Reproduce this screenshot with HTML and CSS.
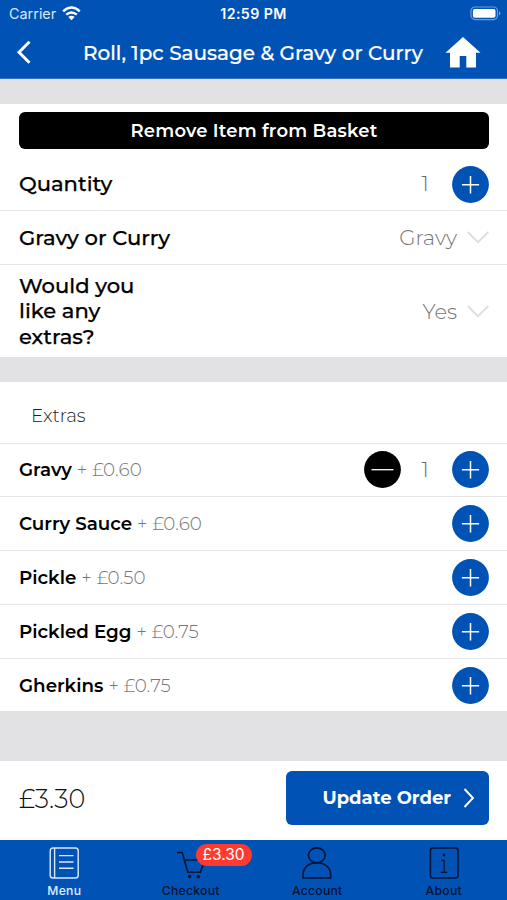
FILE: index.html
```html
<!DOCTYPE html>
<html lang="en">
<head>
<meta charset="utf-8">
<title>Edit item</title>
<link rel="stylesheet" href="styles.css">
</head>
<body>
<svg class="defs" aria-hidden="true">
  <symbol id="plus" viewBox="0 0 37 37"><circle cx="18.5" cy="18.5" r="18.4" fill="#0052b5"/><path d="M9.9 18.7h17.2M18.5 10v17.4" stroke="#fff" stroke-width="1.5"/></symbol>
  <symbol id="minus" viewBox="0 0 37 37"><circle cx="18.5" cy="18.5" r="18.4" fill="#000"/><path d="M7.5 18.7h22" stroke="#fff" stroke-width="1.3"/></symbol>
  <symbol id="down" viewBox="0 0 22 13"><path d="M.7 1L11 11.2 21.3 1" fill="none" stroke="#dedee0" stroke-width="1.9"/></symbol>
</svg>
<div class="app">
  <header class="header">
    <div class="status">
      <div class="carrier"><span>Carrier</span>
        <svg width="19" height="15" viewBox="0 0 19 15"><g fill="none" stroke="#fff" stroke-width="2.4"><path d="M1.2 5.3Q9.5-2.1 17.8 5.3"/><path d="M4.2 8.7Q9.5 4.2 14.8 8.7"/></g><path d="M6.3 11Q9.5 8.4 12.7 11L9.5 14.3z" fill="#fff"/></svg>
      </div>
      <div class="time">12:59 PM</div>
      <svg class="battery" width="31" height="15" viewBox="0 0 31 15"><rect x="1" y="1" width="26.5" height="12.6" rx="4" fill="none" stroke="#6f9cd5" stroke-width="1.2"/><rect x="2.9" y="2.9" width="22.6" height="8.8" rx="1.8" fill="#fff"/><path d="M29 5v4.6q3-2.3 0-4.6" fill="#6f9cd5"/></svg>
    </div>
    <div class="nav">
      <svg class="back" width="16" height="25" viewBox="0 0 16 25"><path d="M13.5 1.7L3 12.2 13.5 22.7" fill="none" stroke="#fff" stroke-width="3"/></svg>
      <h1 class="title">Roll, 1pc Sausage &amp; Gravy or Curry</h1>
      <svg class="home" width="36" height="32" viewBox="0 0 36 32"><path d="M18 0L35.5 15.8H31V30.5H21.3V19H14.7V30.5H5V15.8H.5z" fill="#fff"/></svg>
    </div>
  </header>
  <main class="content">
    <section class="panel options">
      <button class="remove">Remove Item from Basket</button>
      <div class="row quantity"><span class="label">Quantity</span><span class="count">1</span><svg class="round"><use href="#plus"/></svg></div>
      <div class="row choice"><span class="label">Gravy or Curry</span><span class="value">Gravy</span><svg class="down"><use href="#down"/></svg></div>
      <div class="row question"><span class="label">Would you<br>like any<br>extras?</span><span class="value">Yes</span><svg class="down"><use href="#down"/></svg></div>
    </section>
    <section class="panel extras">
      <h2 class="heading">Extras</h2>
      <div class="row extra"><span class="name">Gravy</span><span class="price">+ £0.60</span><svg class="round minus"><use href="#minus"/></svg><span class="count">1</span><svg class="round"><use href="#plus"/></svg></div>
      <div class="row extra"><span class="name">Curry Sauce</span><span class="price">+ £0.60</span><svg class="round"><use href="#plus"/></svg></div>
      <div class="row extra"><span class="name">Pickle</span><span class="price">+ £0.50</span><svg class="round"><use href="#plus"/></svg></div>
      <div class="row extra"><span class="name">Pickled Egg</span><span class="price">+ £0.75</span><svg class="round"><use href="#plus"/></svg></div>
      <div class="row extra"><span class="name">Gherkins</span><span class="price">+ £0.75</span><svg class="round"><use href="#plus"/></svg></div>
    </section>
  </main>
  <div class="summary">
    <span class="total">£3.30</span>
    <button class="update"><span>Update Order</span><svg width="12" height="20" viewBox="0 0 12 20"><path d="M1.5 1L10 10 1.5 19" fill="none" stroke="#fff" stroke-width="1.9"/></svg></button>
  </div>
  <nav class="tabs">
    <div class="tab active"><svg width="32" height="34" viewBox="0 0 32 34"><g fill="none" stroke="#d9e9ff" stroke-width="1.4"><rect x="2.2" y="2" width="28" height="30" rx="2.8"/><path d="M6.6 2v30M11 9.6H25.5M11 16H25.5M11 22.2H25.5" /></g></svg><span>Menu</span></div>
    <div class="tab"><svg width="32" height="34" viewBox="0 0 32 34"><path d="M2 6.5H7.2L12.8 26.2H25.3L30 14H9.5" fill="none" stroke="#031333" stroke-width="1.6"/><circle cx="14.6" cy="30.5" r="1.8" fill="#031333"/><circle cx="23.3" cy="30.5" r="1.8" fill="#031333"/></svg><span>Checkout</span><b class="badge">£3.30</b></div>
    <div class="tab"><svg width="32" height="34" viewBox="0 0 32 34"><g fill="none" stroke="#031333" stroke-width="1.6"><ellipse cx="15.8" cy="9.3" rx="8.4" ry="7.4"/><path d="M2 32V29C2 21 8.5 16.7 15.8 16.7S29.7 21 29.7 29V32z"/></g></svg><span>Account</span></div>
    <div class="tab"><svg width="32" height="34" viewBox="0 0 32 34"><g fill="none" stroke="#031333" stroke-width="1.5"><rect x="2.4" y="2" width="27.6" height="30" rx="2.5"/><path d="M13.4 14.3H16.2V26.2M12.9 26.4H19.3" stroke-width="1.3"/></g><circle cx="15.9" cy="8.9" r="1.3" fill="#031333"/></svg><span>About</span></div>
  </nav>
</div>
</body>
</html>
```

FILE: styles.css
```css
* { box-sizing: border-box; }
body { margin: 0; font-family: Montserrat, Inter, "Open Sans", sans-serif; color: #000; background: #e2e2e4; }
button, h1, h2 { margin: 0; padding: 0; border: 0; font: inherit; }
svg { display: block; flex: none; }
.defs { width: 0; height: 0; position: absolute; }
.app { width: 507px; height: 900px; display: flex; flex-direction: column; overflow: hidden; white-space: nowrap; }

.header { height: 79px; background: #0052b5; color: #fff; border-bottom: 1px solid #2f70c3; }
.status { height: 27px; display: grid; grid-template-columns: 1fr auto 1fr; align-items: center; padding: 0 6px 0 9px; font-family: Inter, sans-serif; }
.carrier { display: flex; align-items: center; gap: 6px; font-size: 14.4px; color: #d8e7fa; }
.time { font-size: 14.2px; font-weight: 600; letter-spacing: .4px; margin-right: 3px; }
.battery { justify-self: end; }
.nav { height: 51px; display: flex; align-items: center; padding: 0 26px 0 16px; }
.title { width: 341px; margin-left: 51px; font-size: 20px; font-weight: 500; -webkit-text-stroke: .2px #fff; }
.home { margin-left: auto; }

.content { flex: 1; padding-top: 25px; }
.panel { background: #fff; }
.options { height: 253px; padding-top: 8px; }
.remove { display: block; width: 470px; height: 37px; margin: 0 0 9px 19px; border-radius: 6px; background: #000; color: #fff; font-size: 18px; font-weight: 600; letter-spacing: .2px; }
.row { display: flex; align-items: center; padding: 0 18px 0 19px; }
.quantity { height: 53px; border-bottom: 1.5px solid #e6e6e8; }
.choice { height: 54px; border-bottom: 1.5px solid #e6e6e8; }
.question { height: 92px; }
.label { flex: 1; font-size: 21.1px; line-height: 25.3px; font-weight: 500; -webkit-text-stroke: .25px #000; }
.value { font-size: 21px; font-weight: 300; color: #747474; margin-right: 10px; }
.down { width: 22px; height: 13px; }
.round { width: 37px; height: 37px; margin-left: auto; }
.count { font-size: 20px; font-weight: 300; color: #666; width: 24px; text-align: center; margin-right: 15px; }
.quantity .round, .count + .round { margin-left: 0; }
.minus { margin-right: 12px; }

.extras { height: 329px; margin-top: 25px; }
.heading { height: 61.5px; line-height: 68px; padding-left: 31px; border-bottom: 1.5px solid #e6e6e8; font-size: 18.3px; font-weight: 300; color: #222; }
.extra { height: 53.8px; border-bottom: 1.5px solid #e6e6e8; }
.extra:last-child { border-bottom: 0; }
.name { font-size: 18.3px; font-weight: 600; margin-right: 5px; }
.price { font-size: 18.3px; font-weight: 300; color: #777; letter-spacing: .1px; }

.summary { height: 79px; background: #fff; display: flex; align-items: center; justify-content: space-between; padding: 0 18px 5px 19px; }
.total { font-size: 25.5px; font-weight: 300; color: #111; }
.update { width: 203px; height: 54px; border-radius: 6px; background: #0052b5; color: #fff; display: flex; align-items: center; justify-content: flex-end; gap: 12px; padding-right: 14px; font-size: 18px; font-weight: 700; }

.tabs { height: 60px; background: #0052b5; display: grid; grid-template-columns: repeat(4, 1fr); padding: 6px 0 0 1px; font-family: Inter, sans-serif; }
.tab { position: relative; display: flex; flex-direction: column; align-items: center; color: #031333; font-size: 12.2px; line-height: 22px; font-weight: 500; letter-spacing: .25px; }
.active { color: #e1eeff; }
.badge { position: absolute; left: 68px; top: -2px; width: 56px; height: 22px; border-radius: 11px; background: #ff3b30; color: #fff; font-size: 15.5px; line-height: 22px; letter-spacing: 0; font-weight: 400; text-align: center; }
```
